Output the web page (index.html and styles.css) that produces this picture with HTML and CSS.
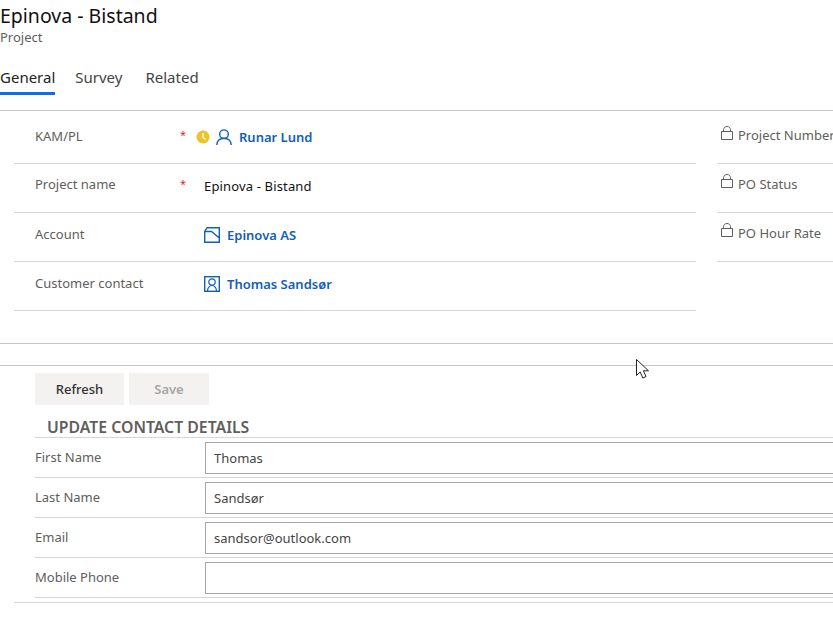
FILE: index.html
```html
<!DOCTYPE html>
<html lang="en">
<head>
    <meta charset="UTF-8">
    <meta name="viewport" content="width=device-width, initial-scale=1.0">
    <title>Epinova - Bistand</title>
    <link rel="stylesheet" href="styles.css">
</head>
<body>
    <div class="page">
        <header class="header">
            <h1 class="title">Epinova - Bistand</h1>
            <div class="entity">Project</div>
        </header>

        <nav class="tabs">
            <a class="tab active">General</a>
            <a class="tab">Survey</a>
            <a class="tab">Related</a>
        </nav>

        <section class="summary">
            <div class="column column-left">
                <div class="field">
                    <div class="label">KAM/PL</div>
                    <span class="required">*</span>
                    <div class="value">
                        <svg class="clock" width="14" height="14" viewBox="0 0 14 14">
                            <circle cx="7" cy="7" r="6.500" fill="#eec22d"/>
                            <path d="M7 3V7.500L9.500 9.500" fill="none" stroke="#fff" stroke-width="1.300"/>
                        </svg>
                        <svg class="icon" width="16" height="16" viewBox="0 0 16 16">
                            <circle cx="8" cy="5.200" r="4.300" fill="none" stroke="#1160b7" stroke-width="1.400"/>
                            <path d="M.8 16c0-4 3-6.800 7.200-6.800s7.200 2.800 7.200 6.800" fill="none" stroke="#1160b7" stroke-width="1.400"/>
                        </svg>
                        <a class="link">Runar Lund</a>
                    </div>
                </div>
                <div class="field">
                    <div class="label">Project name</div>
                    <span class="required">*</span>
                    <div class="value plain">Epinova - Bistand</div>
                </div>
                <div class="field">
                    <div class="label">Account</div>
                    <span class="required"></span>
                    <div class="value">
                        <svg class="icon" width="16" height="16" viewBox="0 0 16 16">
                            <path d="M.7 4.500H7.500L15.300 11V15.300H.7Z M.7 4.500L3 .7H15.300V11" fill="none" stroke="#1160b7" stroke-width="1.400"/>
                        </svg>
                        <a class="link">Epinova AS</a>
                    </div>
                </div>
                <div class="field">
                    <div class="label">Customer contact</div>
                    <span class="required"></span>
                    <div class="value">
                        <svg class="icon" width="16" height="16" viewBox="0 0 16 16">
                            <rect x=".7" y=".7" width="14.600" height="14.600" fill="none" stroke="#1160b7" stroke-width="1.400"/>
                            <circle cx="8" cy="6" r="3.200" fill="none" stroke="#1160b7" stroke-width="1.200"/>
                            <path d="M3.500 15c0-3 2-5.500 4.500-5.500s4.500 2.500 4.500 5.500" fill="none" stroke="#1160b7" stroke-width="1.200"/>
                        </svg>
                        <a class="link">Thomas Sandsør</a>
                    </div>
                </div>
            </div>
            <div class="column column-right">
                <div class="field locked">
                    <svg class="lock" width="12" height="14" viewBox="0 0 12 14">
                        <path d="M.5 5.500H11.500V13.500H.5Z M2.500 5.500V3.800C2.500 1.800 4 .5 6 .5S9.500 1.800 9.500 3.800V5.500" fill="none" stroke="#605e5c"/>
                    </svg>
                    <div class="label">Project Number</div>
                </div>
                <div class="field locked">
                    <svg class="lock" width="12" height="14" viewBox="0 0 12 14">
                        <path d="M.5 5.500H11.500V13.500H.5Z M2.500 5.500V3.800C2.500 1.800 4 .5 6 .5S9.500 1.800 9.500 3.800V5.500" fill="none" stroke="#605e5c"/>
                    </svg>
                    <div class="label">PO Status</div>
                </div>
                <div class="field locked">
                    <svg class="lock" width="12" height="14" viewBox="0 0 12 14">
                        <path d="M.5 5.500H11.500V13.500H.5Z M2.500 5.500V3.800C2.500 1.800 4 .5 6 .5S9.500 1.800 9.500 3.800V5.500" fill="none" stroke="#605e5c"/>
                    </svg>
                    <div class="label">PO Hour Rate</div>
                </div>
            </div>
        </section>

        <div class="divider"></div>

        <section class="contact">
            <div class="buttons">
                <button class="btn">Refresh</button>
                <button class="btn btn-save" disabled>Save</button>
            </div>
            <h2 class="contact-title">UPDATE CONTACT DETAILS</h2>
            <div class="contact-row">
                <label class="contact-label">First Name</label>
                <input class="contact-input" type="text" value="Thomas">
            </div>
            <div class="contact-row">
                <label class="contact-label">Last Name</label>
                <input class="contact-input" type="text" value="Sandsør">
            </div>
            <div class="contact-row">
                <label class="contact-label">Email</label>
                <input class="contact-input" type="text" value="sandsor@outlook.com">
            </div>
            <div class="contact-row">
                <label class="contact-label">Mobile Phone</label>
                <input class="contact-input" type="text" value="">
            </div>
        </section>
        <div class="bottom-line"></div>

        <svg class="cursor" width="14" height="20" viewBox="0 0 14 20">
            <path d="M.5.5V16.500L4.200 13L6.800 19L10 17.600L7.400 11.800H12.500Z" fill="#fff" stroke="#222" stroke-width="1"/>
        </svg>
    </div>
</body>
</html>
```

FILE: styles.css
```css
* {
    box-sizing: border-box;
}

body {
    margin: 0;
    padding: 0;
    font-family: "Noto Sans", "Open Sans", Arial, sans-serif;
    background-color: #fff;
    color: #605e5c;
    overflow: hidden;
}

.page {
    position: relative;
    width: 833px;
    height: 620px;
    overflow: hidden;
}

.header {
    height: 47px;
    padding-top: 3px;
}

.title {
    margin: 0;
    font-size: 19.500px;
    font-weight: 400;
    line-height: 26px;
    color: #111;
}

.entity {
    font-size: 13px;
    line-height: 17px;
    color: #605e5c;
}

.tabs {
    display: flex;
    gap: 20px;
    height: 64px;
    padding-top: 19px;
    border-bottom: 1px solid #c8c6c4;
}

.tab {
    height: 29px;
    font-size: 15px;
    line-height: 22px;
    color: #444;
}

.tab:last-child {
    margin-left: 3px;
}

.tab.active {
    color: #222;
    border-bottom: 3px solid #0f6cf0;
}

.summary {
    display: flex;
    width: 1100px;
    height: 233px;
    padding-left: 14px;
    border-bottom: 1px solid #c8c6c4;
}

.column-left {
    width: 682px;
    margin-right: 21px;
}

.column-right {
    width: 383px;
}

.field {
    display: flex;
    height: 49px;
    padding-left: 21px;
    border-bottom: 1px solid #d8d6d4;
}

.field:first-child {
    height: 53px;
}

.locked {
    padding-left: 4px;
}

.label {
    width: 144px;
    padding-top: 10px;
    font-size: 13px;
    line-height: 20px;
    color: #605e5c;
    white-space: nowrap;
}

.field:nth-child(n+3) .label {
    padding-top: 11px;
}

.locked:nth-child(n+2) .label {
    padding-top: 10px;
}

.field:first-child .label {
    padding-top: 15px;
}

.locked:first-child .label {
    padding-top: 14px;
}

.required {
    width: 25px;
    padding-top: 12px;
    padding-left: 1px;
    font-size: 11px;
    line-height: 16px;
    color: #e8242c;
}

.field:first-child .required {
    padding-top: 16px;
}

.value {
    display: flex;
    align-items: center;
    gap: 7px;
    height: 43px;
    font-size: 13px;
}

.field:first-child .value {
    height: 52px;
    margin-left: -8px;
    gap: 6px;
}

.field:first-child .link {
    margin-left: 1px;
}

.value.plain {
    color: #111;
    letter-spacing: 0.15px;
}

.link {
    font-weight: 600;
    color: #1160b7;
}

.lock {
    margin-top: 10px;
    margin-right: 5px;
    flex-shrink: 0;
}

.locked:first-child .lock {
    margin-top: 15px;
}

.divider {
    height: 22px;
    border-bottom: 1px solid #c8c6c4;
}

.contact {
    width: 1100px;
    padding: 7px 0 0 35px;
}

.buttons {
    display: flex;
    gap: 5px;
}

.btn {
    width: 89px;
    height: 32px;
    border: none;
    background-color: #f3f2f1;
    font-family: inherit;
    font-size: 13px;
    font-weight: 500;
    color: #323130;
}

.btn-save {
    width: 80px;
    font-weight: 600;
    color: #a6a6a6;
}

.contact-title {
    margin: 0;
    height: 33px;
    padding: 11px 0 0 12px;
    font-size: 15.800px;
    line-height: 22px;
    font-weight: 600;
    color: #605e5c;
    border-bottom: 1px solid #d8d6d4;
}

.contact-row {
    display: flex;
    align-items: flex-start;
    height: 40px;
    border-bottom: 1px solid #d8d6d4;
}

.contact-label {
    width: 170px;
    padding-top: 9px;
    font-size: 13px;
    line-height: 20px;
    color: #605e5c;
}

.contact-input {
    width: 800px;
    height: 32px;
    margin-top: 4px;
    padding: 0 8px;
    border: 1px solid #a6a6a6;
    border-radius: 0;
    font-family: inherit;
    font-size: 13px;
    color: #444;
}

.bottom-line {
    width: 819px;
    height: 1px;
    margin: 4px 0 0 14px;
    background-color: #d8d6d4;
}

.cursor {
    position: absolute;
    left: 636px;
    top: 359px;
}
```
